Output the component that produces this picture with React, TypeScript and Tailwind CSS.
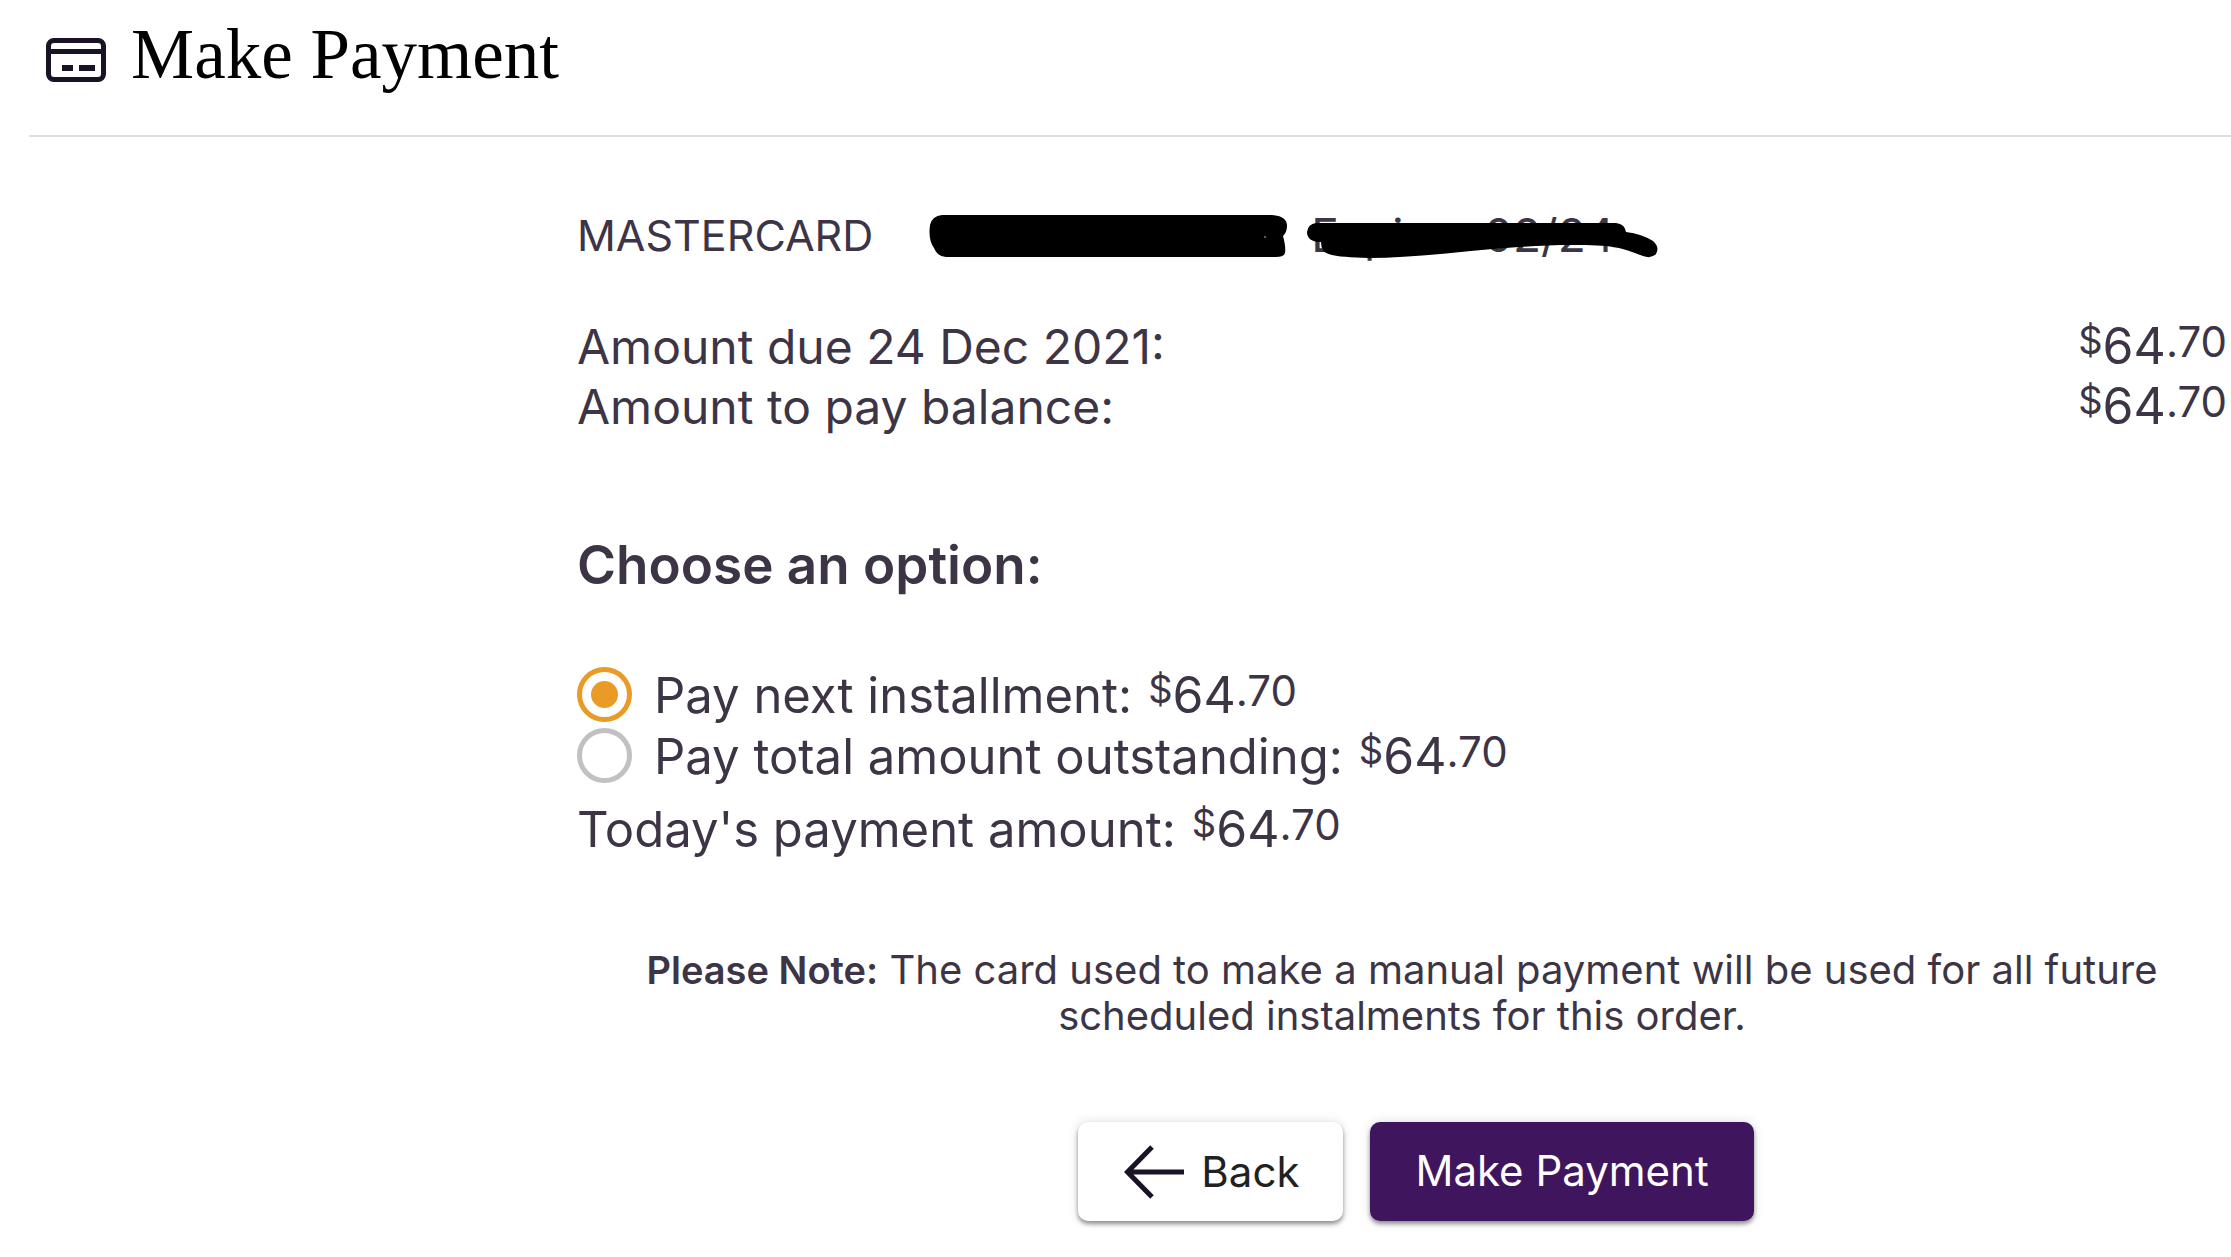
import { useState } from "react";

function CardIcon() {
  return (
    <svg viewBox="0 0 60 44" className="h-11 w-15 shrink-0" aria-hidden="true">
      <rect x="2.5" y="2.5" width="55" height="39" rx="5.5" fill="none" stroke="#1a1326" strokeWidth="5" />
      <rect x="3" y="11" width="54" height="5" fill="#1a1326" />
      <rect x="16" y="27" width="11" height="6" fill="#1a1326" />
      <rect x="33" y="27" width="16" height="6" fill="#1a1326" />
    </svg>
  );
}

function ArrowLeftIcon() {
  return (
    <svg viewBox="0 0 61 54" className="h-[54px] w-[61px] shrink-0" aria-hidden="true">
      <path d="M60 27H4M28 2L3.500 27L28 52" fill="none" stroke="#1a1326" strokeWidth="5" />
    </svg>
  );
}

function Price() {
  return (
    <span className="text-[50px] leading-none whitespace-nowrap">
      <span className="align-[10px] text-[38px] leading-none">$</span>64
      <span className="align-[7px] text-[42px] leading-none">.70</span>
    </span>
  );
}

const options = [
  { id: "next", label: "Pay next installment:" },
  { id: "total", label: "Pay total amount outstanding:" },
];

export default function App() {
  const [choice, setChoice] = useState("next");

  return (
    <main className="min-h-screen overflow-x-hidden bg-white font-['Inter','Liberation_Sans',sans-serif] text-[#3d3545]">
      <header className="ml-[29px] flex h-[137px] items-start gap-[25px] border-b-2 border-[#dedede] pt-3.5 pl-[17px]">
        <div className="pt-6">
          <CardIcon />
        </div>
        <h1 className="font-['Liberation_Serif',serif] text-[71px] leading-[80px] text-black">Make Payment</h1>
      </header>

      <form className="mt-[68px] mr-1 ml-[577px]" onSubmit={(e) => e.preventDefault()}>
        <div className="flex items-center leading-[60px] whitespace-nowrap">
          <span className="text-[43px]">MASTERCARD</span>
          <div className="relative ml-[438px] text-[46px]">
            Expires 02/24
            <svg
              viewBox="0 0 740 60"
              className="absolute top-0 -left-[389px] h-[60px] w-[740px]"
              fill="#000"
              aria-hidden="true"
            >
              <path d="M20 10H350Q365 11 365 21Q365 27 361 31Q364 42 363 48Q362 52 354 52H24Q16 52 12 43Q6 35 8 20Q10 11 20 10Z" />
              <path d="M394 18H694Q703 19 704 27Q720 29 731 36Q738 42 734 49Q729 54 721 51C698 42 690 40 650 40C580 40 510 53 446 53C425 52 405 52 401 45Q399 42 399 37Q385 37 385 27Q386 19 394 18Z" />
              <circle cx="343" cy="32" r="1" fill="#777" />
            </svg>
          </div>
        </div>

        <dl className="mt-[52px] text-5xl leading-[60px]">
          <div className="flex h-[60px] items-baseline justify-between">
            <dt>Amount due 24 Dec 2021:</dt>
            <dd><Price /></dd>
          </div>
          <div className="flex h-[60px] items-baseline justify-between">
            <dt>Amount to pay balance:</dt>
            <dd><Price /></dd>
          </div>
        </dl>

        <fieldset className="mt-[98px]">
          <legend className="text-[53px] leading-[60px] font-semibold">Choose an option:</legend>
          <div className="mt-[69px]">
            {options.map((option) => (
              <label key={option.id} className="flex h-[61px] items-center">
                <input
                  type="radio"
                  name="payment"
                  value={option.id}
                  checked={choice === option.id}
                  onChange={() => setChoice(option.id)}
                  className="grid size-[55px] shrink-0 appearance-none place-items-center rounded-full border-[5px] border-[#c2c0c3] before:size-[27px] before:rounded-full checked:border-[#e99a27] checked:before:bg-[#e99a27]"
                />
                <span className="ml-[22px] flex items-baseline gap-4 pt-0.5 text-[49px] leading-[61px] whitespace-nowrap">
                  <span>{option.label}</span>
                  <Price />
                </span>
              </label>
            ))}
          </div>
        </fieldset>

        <p className="mt-3.5 flex h-[60px] items-baseline gap-4 text-[49px] leading-[60px] whitespace-nowrap">
          <span>Today's payment amount:</span>
          <Price />
        </p>

        <p className="mx-auto mt-[87px] max-w-[1560px] text-center text-[40px] leading-[46px]">
          <strong className="text-[38px] leading-none font-semibold">Please Note:</strong> The card used to make a manual payment will be
          used for all future scheduled instalments for this order.
        </p>

        <div className="mt-[83px] ml-7 flex justify-center gap-[27px] text-[42px] leading-[50px]">
          <button
            type="button"
            className="flex h-[99px] items-center gap-4 rounded-[10px] bg-white pr-11 pl-[46px] text-[#212121] shadow-[0_3px_4px_rgba(0,0,0,0.4),0_0_12px_rgba(0,0,0,0.12)]"
          >
            <ArrowLeftIcon />
            Back
          </button>
          <button
            type="submit"
            className="h-[99px] rounded-[10px] bg-[#3f165d] px-[45px] pb-0.5 text-white shadow-[0_3px_4px_rgba(0,0,0,0.4),0_0_12px_rgba(0,0,0,0.12)]"
          >
            Make Payment
          </button>
        </div>
      </form>
    </main>
  );
}
